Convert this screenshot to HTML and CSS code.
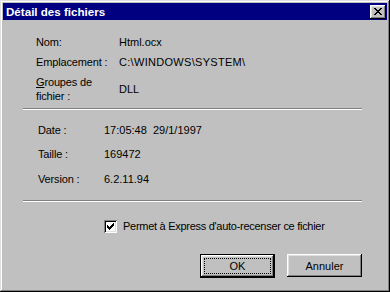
FILE: index.html
```html
<!DOCTYPE html>
<html lang="fr">
<head>
<meta charset="utf-8">
<title>Détail des fichiers</title>
<link rel="stylesheet" href="styles.css">
</head>
<body>
<div class="window">
  <div class="titlebar">
    <span class="title">Détail des fichiers</span>
    <button class="close" aria-label="Fermer">
      <svg width="8" height="7" viewBox="0 0 8 7" shape-rendering="crispEdges">
        <rect x="0" y="0" width="2" height="1"/><rect x="6" y="0" width="2" height="1"/>
        <rect x="1" y="1" width="2" height="1"/><rect x="5" y="1" width="2" height="1"/>
        <rect x="2" y="2" width="4" height="1"/>
        <rect x="3" y="3" width="2" height="1"/>
        <rect x="2" y="4" width="4" height="1"/>
        <rect x="1" y="5" width="2" height="1"/><rect x="5" y="5" width="2" height="1"/>
        <rect x="0" y="6" width="2" height="1"/><rect x="6" y="6" width="2" height="1"/>
      </svg>
    </button>
  </div>
  <div class="content">
    <div class="info info-file">
      <span class="label">Nom:</span><span class="value">Html.ocx</span>
      <span class="label">Emplacement :</span><span class="value path">C:\WINDOWS\SYSTEM\</span>
      <span class="label"><u>G</u>roupes de<br>fichier :</span><span class="value">DLL</span>
    </div>
    <div class="sep"></div>
    <div class="info info-meta">
      <span class="label">Date :</span><span class="value">17:05:48&nbsp;&nbsp;29/1/1997</span>
      <span class="label">Taille :</span><span class="value">169472</span>
      <span class="label last">Version :</span><span class="value last">6.2.11.94</span>
    </div>
    <div class="sep sep2"></div>
    <label class="check-row">
      <span class="checkbox">
        <svg width="7" height="7" viewBox="0 0 7 7" shape-rendering="crispEdges">
          <rect x="6" y="0" width="1" height="3"/>
          <rect x="5" y="1" width="1" height="3"/>
          <rect x="4" y="2" width="1" height="3"/>
          <rect x="3" y="3" width="1" height="3"/>
          <rect x="2" y="4" width="1" height="3"/>
          <rect x="1" y="3" width="1" height="3"/>
          <rect x="0" y="2" width="1" height="3"/>
        </svg>
      </span>
      <span class="check-text">Permet à Express d'auto-recenser ce fichier</span>
    </label>
    <div class="buttons">
      <button class="btn default"><span class="focus">OK</span></button>
      <button class="btn">Annuler</button>
    </div>
  </div>
</div>
</body>
</html>
```
FILE: styles.css
```css
html, body {
  margin: 0;
  padding: 0;
  background: #c0c0c0;
}
body {
  font-family: "Liberation Sans", Arial, sans-serif;
  font-size: 11px;
  color: #000;
}
.window {
  width: 390px;
  height: 292px;
  box-sizing: border-box;
  padding: 3px;
  background: #c0c0c0;
  box-shadow: inset -1px -1px #000, inset 1px 1px #dfdfdf, inset -2px -2px #808080, inset 2px 2px #fff;
  display: flex;
  flex-direction: column;
}
.titlebar {
  height: 17px;
  background: #000080;
  display: flex;
  align-items: center;
  justify-content: space-between;
  padding: 0 1px 0 3px;
}
.title {
  color: #fff;
  font-weight: bold;
  font-size: 11.6px;
  line-height: 17px;
}
.close {
  width: 16px;
  height: 14px;
  padding: 0;
  margin: 0;
  border: none;
  background: #c0c0c0;
  box-shadow: inset -1px -1px #000, inset 1px 1px #fff, inset -2px -2px #808080, inset 2px 2px #dfdfdf;
  display: flex;
  align-items: center;
  justify-content: center;
}
.close svg { fill: #000; margin: 0 1px 1px 0; }
.content {
  padding: 0 25px 0 20px;
  display: flex;
  flex-direction: column;
}
.info {
  display: grid;
  line-height: 14px;
  align-items: center;
}
.info-file {
  margin-top: 15px;
  padding-left: 13px;
  grid-template-columns: 83px auto;
  row-gap: 6px;
}
.info-meta {
  margin-top: 13px;
  padding-left: 15px;
  grid-template-columns: 66px auto;
  grid-template-rows: 14px 14px 14px;
  row-gap: 10px;
}
.info-meta .last { margin-top: 1px; }
.label { white-space: nowrap; letter-spacing: -0.15px; }
.value { white-space: nowrap; }
.path { letter-spacing: 0.3px; }
.sep {
  margin-top: 5px;
  height: 0;
  border-top: 1px solid #808080;
  border-bottom: 1px solid #fff;
}
.sep2 { margin-top: 15px; }
.check-row {
  margin-top: 17px;
  padding-left: 81px;
  display: flex;
  align-items: center;
  gap: 6px;
  line-height: 14px;
}
.check-text { letter-spacing: -0.28px; white-space: nowrap; }
.checkbox {
  width: 13px;
  height: 13px;
  box-sizing: border-box;
  background: #fff;
  box-shadow: inset 1px 1px #808080, inset -1px -1px #fff, inset 2px 2px #000, inset -2px -2px #dfdfdf;
  display: flex;
  align-items: center;
  justify-content: center;
}
.checkbox svg { fill: #000; }
.buttons {
  margin-top: 21px;
  display: flex;
  justify-content: flex-end;
  gap: 12px;
}
.btn {
  width: 75px;
  height: 23px;
  margin: 0;
  padding: 0;
  border: none;
  background: #c0c0c0;
  font-family: "Liberation Sans", Arial, sans-serif;
  font-size: 11px;
  color: #000;
  box-shadow: inset -1px -1px #000, inset 1px 1px #fff, inset -2px -2px #808080, inset 2px 2px #dfdfdf;
  display: flex;
  align-items: center;
  justify-content: center;
}
.btn.default {
  height: 24px;
  box-shadow: inset 0 0 0 1px #000, inset -2px -2px #000, inset 2px 2px #fff, inset -3px -3px #808080, inset 3px 3px #dfdfdf;
  padding: 4px;
  box-sizing: border-box;
}
.focus {
  flex: 1;
  align-self: stretch;
  border: 1px dotted #000;
  display: flex;
  align-items: center;
  justify-content: center;
}
```
